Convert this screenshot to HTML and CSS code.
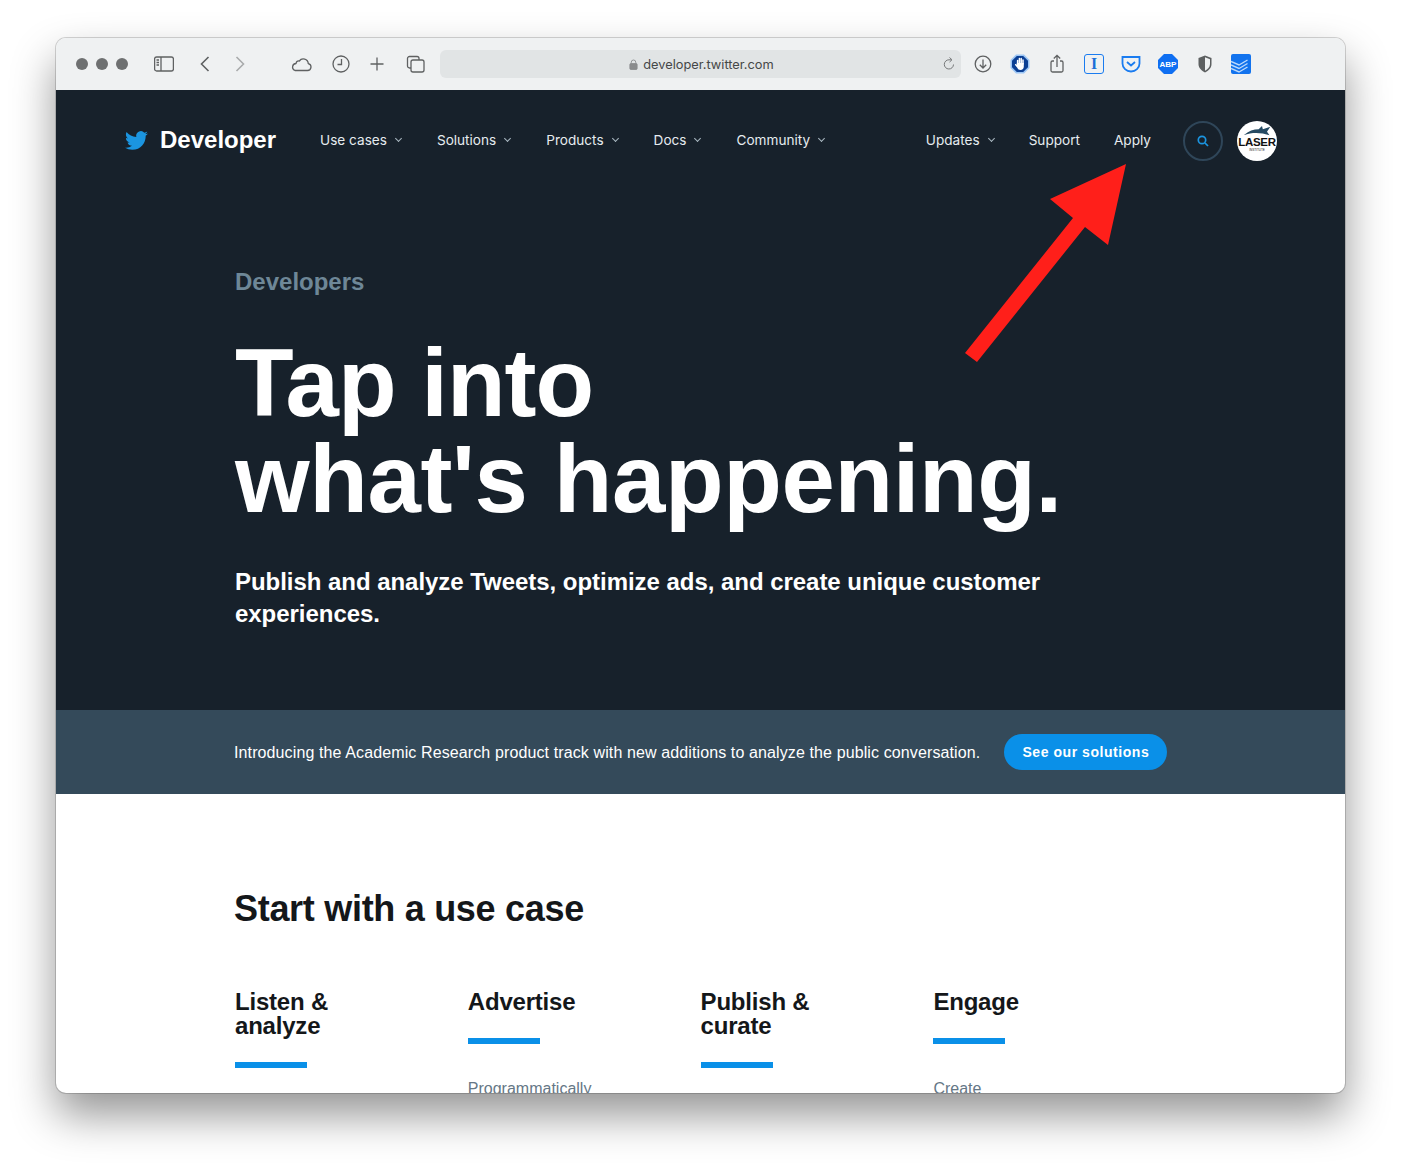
FILE: index.html
```html
<!DOCTYPE html>
<html>
<head>
  <meta charset="UTF-8">
  <title>Twitter Developer</title>
  <link rel="stylesheet" href="styles.css">
</head>
<body>

  <div class="window">
    <div class="toolbar">
      <div class="dots"><i></i><i></i><i></i></div>

      <svg class="tool tool-sidebar" viewBox="0 0 20 20"><rect x="0.6" y="3" width="18.8" height="14" rx="2"/><path d="M7 3v14M2.500 6h2.500M2.500 8.500h2.500M2.500 11h2.500"/></svg>
      <svg class="tool tool-back" viewBox="0 0 20 20"><path d="M13.500 3l-7 7 7 7"/></svg>
      <svg class="tool tool-forward" viewBox="0 0 20 20"><path d="M6.500 3l7 7-7 7"/></svg>
      <svg class="tool tool-cloud" viewBox="0 0 22 20"><path d="M5 16.500h12.500a3.500 3.500 0 0 0 .8-6.900A5 5 0 0 0 9.300 7 3 3 0 0 0 6 9.500a3.600 3.600 0 0 0-1 7z"/></svg>
      <svg class="tool tool-clock" viewBox="0 0 20 20"><circle cx="10" cy="10" r="8"/><path d="M10.500 5v5.500H6.500"/></svg>
      <svg class="tool tool-plus" viewBox="0 0 20 20"><path d="M10 3.500v13M3.500 10h13"/></svg>
      <svg class="tool tool-tabs" viewBox="0 0 20 20"><path d="M5 14H3.500A2 2 0 0 1 1.500 12V4.500a2 2 0 0 1 2-2H11a2 2 0 0 1 2 2V6"/><rect x="5" y="6" width="13" height="12" rx="2"/></svg>

      <div class="address">
        <svg class="lock" viewBox="0 0 10 12"><path d="M2.500 5V3.500a2.500 2.500 0 0 1 5 0V5"/><rect x="1" y="5" width="8" height="6.500" rx="1"/></svg>
        <span>developer.twitter.com</span>
        <svg class="reload" viewBox="0 0 14 14"><path d="M11.500 7.500A4.600 4.600 0 1 1 7 2.800h2"/><path d="M7.500 0.500l2.500 2.300-2.500 2.300"/></svg>
      </div>

      <div class="extensions">
        <svg class="tool" viewBox="0 0 20 20"><circle cx="10" cy="10" r="7.800"/><path d="M10 5.500v8.500M6.800 10.800l3.200 3.200 3.200-3.200"/></svg>
        <svg class="ext" viewBox="0 0 20 20"><path class="ext-halo" d="M6 .5h8L19.500 6v8L14 19.500H6L.5 14V6z"/><path class="ext-navy" d="M6.800 2h6.400L18 6.800v6.400L13.200 18H6.800L2 13.200V6.800z"/><path class="ext-fingers" d="M7.600 10V6.500M9.400 10V4.600M11.200 10V4.600M13 10V6"/><path class="ext-palm" d="M6.800 9h7v3.500c0 2.100-1.300 3.500-3.300 3.500-1.700 0-2.500-1-3.200-2.300L5 11c-.4-.8.500-1.400 1.200-.8l.6.600z"/></svg>
        <svg class="tool" viewBox="0 0 20 20"><path d="M7 7H5.500A1.500 1.500 0 0 0 4 8.500v8A1.500 1.500 0 0 0 5.500 18h9a1.500 1.500 0 0 0 1.500-1.500v-8A1.500 1.500 0 0 0 14.500 7H13M10 13V1.500M6.800 4.500L10 1.300l3.200 3.200"/></svg>
        <div class="ext-box"><span>I</span></div>
        <svg class="ext-pocket" viewBox="0 0 20 20"><path d="M1.500 3h17v6.500a8.500 8 0 0 1-17 0z"/><path d="M6 8l4 3.500L14 8"/></svg>
        <div class="ext-abp"><span>ABP</span></div>
        <svg class="ext" viewBox="0 0 20 20"><path class="shield-dark" d="M10 1.500l6.500 2.500v6c0 4-3 6.800-6.500 8.500-3.500-1.700-6.500-4.500-6.500-8.500V4z"/><path class="shield-light" d="M10 3.300l5 1.900v4.800c0 3.200-2.300 5.300-5 6.800z"/></svg>
        <svg class="ext ext-last" viewBox="0 0 20 20"><rect class="todo-bg" width="20" height="20" rx="2"/><path class="todo-line" d="M0 7.500l8 3.500 8.500-5M0 11l8 3.500 8.500-5M0 14.500L8 18l8.500-5"/></svg>
      </div>
    </div>

    <div class="page">
      <header class="hero">
        <nav class="nav">
          <a class="brand" href="#">
            <svg class="bird" viewBox="0 0 24 24"><path d="M23.950 4.570a10 10 0 0 1-2.820.770 4.960 4.960 0 0 0 2.160-2.720c-.950.550-2 .960-3.130 1.190a4.920 4.920 0 0 0-8.380 4.480C7.690 8.090 4.070 6.130 1.640 3.160a4.820 4.820 0 0 0-.670 2.480c0 1.710.870 3.210 2.190 4.100a4.900 4.900 0 0 1-2.230-.620v.060a4.920 4.920 0 0 0 3.950 4.830 5 5 0 0 1-2.210.080 4.940 4.940 0 0 0 4.610 3.420A9.870 9.870 0 0 1 0 19.540a14 14 0 0 0 7.560 2.210c9.050 0 14-7.500 14-13.980 0-.210 0-.420-.020-.630a9.940 9.940 0 0 0 2.460-2.550z"/></svg>
            <span>Developer</span>
          </a>
          <div class="nav-links">
            <a class="nav-link" href="#">Use cases<i class="chevron"></i></a>
            <a class="nav-link" href="#">Solutions<i class="chevron"></i></a>
            <a class="nav-link" href="#">Products<i class="chevron"></i></a>
            <a class="nav-link" href="#">Docs<i class="chevron"></i></a>
            <a class="nav-link" href="#">Community<i class="chevron"></i></a>
          </div>
          <div class="nav-right">
            <a class="nav-link" href="#">Updates<i class="chevron"></i></a>
            <a class="nav-link" href="#">Support</a>
            <a class="nav-link" href="#">Apply</a>
            <a class="search" href="#"><svg viewBox="0 0 12 12"><circle cx="5" cy="5" r="3.700"/><path d="M8 8l3 3"/></svg></a>
            <a class="avatar" href="#">
              <svg class="shark" viewBox="0 0 36 12"><path d="M2 11C8 6 14 4 20 4l4-4 1 4 9-3-4 6 3 4-8-2C18 8 10 8 2 11z"/></svg>
              <b>LASER</b>
              <small>INSTITUTE</small>
            </a>
          </div>
        </nav>

        <div class="hero-copy">
          <div class="eyebrow">Developers</div>
          <h1><span class="line-short">Tap into</span><span class="line-long">what's happening.</span></h1>
          <p>Publish and analyze Tweets, optimize ads, and create unique customer experiences.</p>
        </div>
      </header>

      <div class="banner">
        <span>Introducing the Academic Research product track with new additions to analyze the public conversation.</span>
        <a class="banner-btn" href="#">See our solutions</a>
      </div>

      <section class="cases">
        <h2>Start with a use case</h2>
        <div class="case-grid">
          <div class="case">
            <h3>Listen &amp; analyze</h3>
            <div class="bar"></div>
          </div>
          <div class="case">
            <h3>Advertise</h3>
            <div class="bar"></div>
            <p>Programmatically</p>
          </div>
          <div class="case">
            <h3>Publish &amp; curate</h3>
            <div class="bar"></div>
          </div>
          <div class="case">
            <h3>Engage</h3>
            <div class="bar"></div>
            <p>Create</p>
          </div>
        </div>
      </section>
    </div>
  </div>

  <svg class="arrow" viewBox="0 0 1401 1167"><polygon points="1126,164 1050,199 1073,218 965,353 977,362 1085,227 1108,245"/></svg>

</body>
</html>
```

FILE: styles.css
```css
html, body { margin: 0; padding: 0; height: 1167px; overflow: hidden; background: #fff; }
body { position: relative; padding: 38px 56px 0; box-sizing: border-box; font-family: "Liberation Sans", Arial, sans-serif; }
a { color: inherit; text-decoration: none; }

.window { width: 1289px; height: 1055px; border-radius: 10px; overflow: hidden; background: #fff; box-shadow: 0 0 0 1px rgba(0,0,0,0.16), 0 22px 44px rgba(0,0,0,0.42); }

/* safari bar */
.toolbar { height: 52px; box-sizing: border-box; display: flex; align-items: center; padding: 0 0 0 20px; background: #eff1f2; }
.dots { display: flex; gap: 8px; }
.dots i { width: 12px; height: 12px; border-radius: 50%; background: #6e7071; }
.tool { width: 20px; height: 20px; flex: none; fill: none; stroke: #5f6162; stroke-width: 1.300; }
.tool-sidebar { margin-left: 26px; }
.tool-back { margin-left: 21px; stroke-width: 1.600; }
.tool-forward { margin-left: 15px; stroke: #a9abac; stroke-width: 1.600; }
.tool-cloud { width: 22px; margin-left: 40px; }
.tool-clock { margin-left: 19px; }
.tool-plus { margin-left: 16px; }
.tool-tabs { margin-left: 19px; }
.address { width: 521px; height: 28px; box-sizing: border-box; padding-left: 2px; margin-left: 14px; border-radius: 6px; background: #e1e4e5; display: flex; align-items: center; justify-content: center; position: relative; font: 12.800px "Inter", sans-serif; color: #454748; }
.lock { width: 9px; height: 11px; margin-right: 5px; fill: #8a8c8d; stroke: #8a8c8d; }
.lock path { fill: none; }
.reload { position: absolute; right: 5px; top: 7px; width: 14px; height: 14px; fill: none; stroke: #77797a; }
.extensions { display: flex; align-items: center; gap: 17px; margin-left: 12px; }
.ext { width: 20px; height: 20px; flex: none; }
.ext-last { margin-left: -1px; }
.ext-halo { fill: #9cc6f5; }
.ext-navy { fill: #0b3f94; }
.ext-fingers { fill: none; stroke: #fff; stroke-width: 1.500; stroke-linecap: round; }
.ext-palm { fill: #fff; }
.ext-box { width: 20px; height: 20px; box-sizing: border-box; border: 1.500px solid #1a7cf0; border-radius: 3px; display: flex; align-items: center; justify-content: center; color: #1a6fd8; font: bold 16px "Liberation Serif", serif; }
.ext-pocket { width: 20px; height: 20px; fill: none; stroke: #1a7cf0; stroke-width: 1.800; }
.ext-abp { width: 20px; height: 20px; background: #0f6ff2; clip-path: polygon(30% 0, 70% 0, 100% 30%, 100% 70%, 70% 100%, 30% 100%, 0 70%, 0 30%); display: flex; align-items: center; justify-content: center; color: #fff; font: bold 8px "Liberation Sans", sans-serif; }
.shield-dark { fill: #5d6061; }
.shield-light { fill: #eff1f2; }
.todo-bg { fill: #1273ee; }
.todo-line { fill: none; stroke: #bcd9fb; stroke-width: 1.400; }

/* page */
.page { height: 1003px; overflow: hidden; }
.hero { height: 620px; background: #17212b; color: #fff; }
.nav { display: flex; align-items: center; height: 100px; padding: 0 68px 0 69px; }
.brand { display: flex; align-items: center; gap: 12px; font-size: 24px; font-weight: bold; }
.bird { width: 23px; height: 23px; fill: #1b95e0; }
.nav-links { display: flex; margin-left: 44px; gap: 35px; }
.nav-right { display: flex; align-items: center; margin-left: auto; gap: 34px; }
.nav-link { display: flex; align-items: center; margin-top: -1px; font: 13.600px "Inter", sans-serif; color: #e6ecf0; }
.chevron { width: 4px; height: 4px; margin: -2px 1px 0 9px; border-right: 1px solid #aab8c2; border-bottom: 1px solid #aab8c2; transform: rotate(45deg); }
.search { width: 40px; height: 40px; box-sizing: border-box; margin: 1px 0 0 -2px; border: 2px solid #2f4659; border-radius: 50%; display: flex; align-items: center; justify-content: center; }
.search svg { width: 12px; height: 12px; fill: none; stroke: #1b95e0; stroke-width: 1.700; }
.avatar { width: 40px; height: 40px; margin: 1px 0 0 -20px; border-radius: 50%; background: #fff; color: #111; display: flex; flex-direction: column; align-items: center; overflow: hidden; }
.shark { width: 30px; height: 10px; margin-top: 5px; fill: #254a63; }
.avatar b { font-size: 11.500px; line-height: 13px; letter-spacing: -0.300px; }
.avatar small { font-size: 3px; line-height: 3px; }

.hero-copy { padding-left: 179px; }
.eyebrow { margin-top: 76px; font-size: 24px; line-height: 32px; font-weight: bold; color: #6e8797; }
h1 { margin: 37px 0 0; font-size: 96px; line-height: 96px; font-weight: bold; }
h1 span { display: block; }
.line-short { letter-spacing: -1px; }
.line-long { letter-spacing: -0.400px; }
.hero-copy p { width: 830px; margin: 39px 0 0; font-size: 24px; line-height: 32px; font-weight: bold; letter-spacing: -0.040px; }

.banner { height: 84px; background: #344a5a; color: #fff; display: flex; align-items: center; padding-left: 178px; gap: 24px; font-size: 16px; letter-spacing: 0.115px; }
.banner span { padding-top: 1px; }
.banner-btn { width: 163px; height: 36px; border-radius: 18px; background: #0a90e8; display: flex; align-items: center; justify-content: center; font-size: 14px; font-weight: bold; letter-spacing: 0.550px; }

.cases { padding: 93px 0 0 178px; color: #14171a; }
h2 { margin: 0; font-size: 36px; line-height: 44px; font-weight: bold; letter-spacing: -0.300px; }
.case-grid { display: grid; grid-template-columns: repeat(4, 232.800px); margin-top: 59px; padding-left: 1px; }
h3 { width: 140px; margin: 0; font-size: 24px; line-height: 24px; font-weight: bold; letter-spacing: -0.200px; }
.bar { width: 72px; height: 6px; margin-top: 24px; background: #0a90e8; }
.case p { margin: 34px 0 0; font-size: 16px; line-height: 22px; color: #657786; }

/* annotation on top of the shot */
.arrow { position: absolute; left: 0; top: 0; width: 1401px; height: 1167px; pointer-events: none; }
.arrow polygon { fill: #ff1f1a; }
```
